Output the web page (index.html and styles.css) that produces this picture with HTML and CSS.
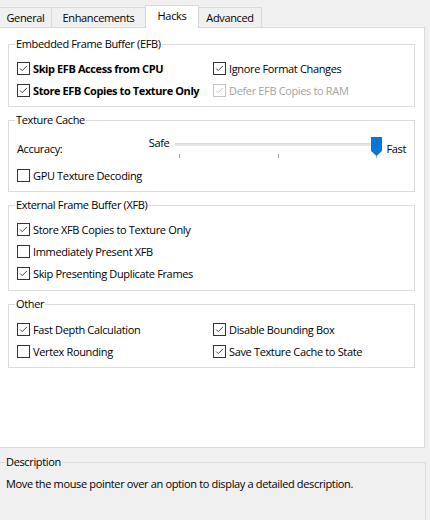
FILE: index.html
```html
<!DOCTYPE html>
<html>
<head>
<meta charset="utf-8">
<link rel="stylesheet" href="styles.css">
</head>
<body>
<div class="tabs">
  <div class="tab tab-general">General</div>
  <div class="tab tab-enh">Enhancements</div>
  <div class="tab tab-hacks active">Hacks</div>
  <div class="tab tab-adv">Advanced</div>
</div>
<div class="panel">
  <fieldset class="group group-efb">
    <legend>Embedded Frame Buffer (EFB)</legend>
    <div class="grid">
      <label class="opt bold"><span class="cb checked"><svg viewBox="0 0 13 13"><path d="M2.5 6.5 L5 9 L10.5 3.5"/></svg></span>Skip EFB Access from CPU</label>
      <label class="opt"><span class="cb checked"><svg viewBox="0 0 13 13"><path d="M2.5 6.5 L5 9 L10.5 3.5"/></svg></span>Ignore Format Changes</label>
      <label class="opt bold"><span class="cb checked"><svg viewBox="0 0 13 13"><path d="M2.5 6.5 L5 9 L10.5 3.5"/></svg></span>Store EFB Copies to Texture Only</label>
      <label class="opt disabled"><span class="cb checked"><svg viewBox="0 0 13 13"><path d="M2.5 6.5 L5 9 L10.5 3.5"/></svg></span>Defer EFB Copies to RAM</label>
    </div>
  </fieldset>
  <fieldset class="group group-tc">
    <legend>Texture Cache</legend>
    <div class="slider-row">
      <span class="acc-label">Accuracy:</span>
      <span class="safe">Safe</span>
      <div class="slider">
        <div class="track"></div>
        <div class="tick tick-1"></div>
        <div class="tick tick-2"></div>
        <div class="tick tick-3"></div>
        <svg class="thumb" viewBox="0 0 11 19"><path d="M0 0 H11 V14 L5.5 19 L0 14 Z"/></svg>
      </div>
      <span class="fast">Fast</span>
    </div>
    <label class="opt"><span class="cb"></span>GPU Texture Decoding</label>
  </fieldset>
  <fieldset class="group group-xfb">
    <legend>External Frame Buffer (XFB)</legend>
    <label class="opt"><span class="cb checked"><svg viewBox="0 0 13 13"><path d="M2.5 6.5 L5 9 L10.5 3.5"/></svg></span>Store XFB Copies to Texture Only</label>
    <label class="opt"><span class="cb"></span>Immediately Present XFB</label>
    <label class="opt"><span class="cb checked"><svg viewBox="0 0 13 13"><path d="M2.5 6.5 L5 9 L10.5 3.5"/></svg></span>Skip Presenting Duplicate Frames</label>
  </fieldset>
  <fieldset class="group group-other">
    <legend>Other</legend>
    <div class="grid">
      <label class="opt"><span class="cb checked"><svg viewBox="0 0 13 13"><path d="M2.5 6.5 L5 9 L10.5 3.5"/></svg></span>Fast Depth Calculation</label>
      <label class="opt"><span class="cb checked"><svg viewBox="0 0 13 13"><path d="M2.5 6.5 L5 9 L10.5 3.5"/></svg></span>Disable Bounding Box</label>
      <label class="opt"><span class="cb"></span>Vertex Rounding</label>
      <label class="opt"><span class="cb checked"><svg viewBox="0 0 13 13"><path d="M2.5 6.5 L5 9 L10.5 3.5"/></svg></span>Save Texture Cache to State</label>
    </div>
  </fieldset>
</div>
<fieldset class="desc">
  <legend>Description</legend>
  <p class="desc-text">Move the mouse pointer over an option to display a detailed description.</p>
</fieldset>
</body>
</html>
```

FILE: styles.css
```css
html, body {
  margin: 0;
  padding: 0;
  background: #f0f0f0;
}
body {
  width: 430px;
  height: 520px;
  overflow: hidden;
  font-family: "Open Sans", "Noto Sans", sans-serif;
  font-size: 11px;
  letter-spacing: -0.35px;
  color: #000;
}
.tabs {
  display: flex;
  align-items: flex-end;
  height: 27px;
}
.tab {
  box-sizing: border-box;
  height: 20px;
  border: 1px solid #d9d9d9;
  border-bottom: none;
  background: #f0f0f0;
  display: flex;
  align-items: center;
  justify-content: center;
  margin-right: -1px;
  line-height: 16px;
}
.tab-general { width: 53px; margin-left: -1px; }
.tab-enh { width: 95px; }
.tab-hacks { width: 54px; }
.tab-adv { width: 64px; }
.tab.active {
  background: #fff;
  height: 23px;
  margin-bottom: -1px;
  position: relative;
  z-index: 1;
  padding-bottom: 2px;
}
.panel {
  box-sizing: border-box;
  width: 425px;
  height: 421px;
  background: #fff;
  border: 1px solid #d9d9d9;
  border-left: none;
  padding-top: 8px;
}
.group {
  margin: 0 9px 5px 8px;
  border: 1px solid #dcdcdc;
  padding: 5px 8px 5px 8px;
  min-width: 0;
}
.group legend, .desc legend {
  padding: 0 1px;
  margin-left: -2px;
  line-height: 16px;
}
.group-xfb { padding-bottom: 6px; }
.group-other { padding-top: 6px; padding-bottom: 5px; }
.grid {
  display: grid;
  grid-template-columns: 196px 1fr;
}
.opt {
  display: flex;
  align-items: center;
  height: 22px;
  white-space: nowrap;
}
.opt.bold { font-weight: bold; letter-spacing: -0.4px; }
.opt.disabled { color: #a3a3a3; }
.cb {
  box-sizing: border-box;
  width: 13px;
  height: 13px;
  border: 1px solid #333;
  background: #fff;
  margin-right: 3px;
  flex: none;
  display: block;
}
.cb svg {
  display: block;
  width: 11px;
  height: 11px;
}
.cb path {
  fill: none;
  stroke: #333;
  stroke-width: 1.1;
}
.disabled .cb { border-color: #c4c4c4; }
.disabled .cb path { stroke: #bdbdbd; }
.slider-row {
  display: flex;
  height: 31px;
  align-items: center;
}
.acc-label { width: 132px; }
.safe {
  width: 25px;
  align-self: flex-start;
  margin-top: 2px;
  line-height: 16px;
}
.slider {
  position: relative;
  width: 210px;
  height: 31px;
}
.track {
  position: absolute;
  left: 1px;
  top: 10px;
  width: 202px;
  height: 3px;
  background: #e6e6e6;
  border-top: 1px solid #dadada;
  box-sizing: border-box;
}
.tick {
  position: absolute;
  top: 21px;
  width: 1px;
  height: 4px;
  background: #a8a8a8;
}
.tick-1 { left: 5px; }
.tick-2 { left: 104px; }
.tick-3 { left: 202px; background: #c9a77a; }
.thumb {
  position: absolute;
  left: 197px;
  top: 4px;
  width: 11px;
  height: 19px;
}
.thumb path { fill: #0078d7; }
.fast {
  align-self: flex-start;
  margin-top: 8px;
  margin-left: 3px;
  line-height: 16px;
}
.desc {
  margin: 6px 4px 0 -1px;
  border: 1px solid #dcdcdc;
  padding: 6px 6px 30px 6px;
  min-width: 0;
}
.desc legend { margin-left: -1px; }
.desc-text {
  margin: 0;
  line-height: 16px;
}
```
